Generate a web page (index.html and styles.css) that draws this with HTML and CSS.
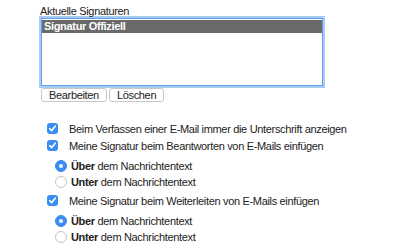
FILE: index.html
```html
<!DOCTYPE html>
<html lang="de">
<head>
    <meta charset="UTF-8">
    <title>Signaturen</title>
    <link rel="stylesheet" href="styles.css">
</head>
<body>

<div class="settings">
    <div class="list-label">Aktuelle Signaturen</div>
    <div class="sig-list">
        <div class="sig-item selected">Signatur Offiziell</div>
    </div>
    <div class="buttons">
        <button class="btn">Bearbeiten</button>
        <button class="btn">Löschen</button>
    </div>

    <div class="options">
        <div class="opt">
            <span class="check"><svg viewBox="0 0 11 11"><path d="M2.6 5.6 L4.6 7.8 L8.4 3" /></svg></span>
            <span>Beim Verfassen einer E-Mail immer die Unterschrift anzeigen</span>
        </div>
        <div class="opt">
            <span class="check"><svg viewBox="0 0 11 11"><path d="M2.6 5.6 L4.6 7.8 L8.4 3" /></svg></span>
            <span>Meine Signatur beim Beantworten von E-Mails einfügen</span>
        </div>
        <div class="radios">
            <div class="radio-row"><span class="radio on"></span><span><b>Über</b> dem Nachrichtentext</span></div>
            <div class="radio-row"><span class="radio"></span><span><b>Unter</b> dem Nachrichtentext</span></div>
        </div>
        <div class="opt">
            <span class="check"><svg viewBox="0 0 11 11"><path d="M2.6 5.6 L4.6 7.8 L8.4 3" /></svg></span>
            <span>Meine Signatur beim Weiterleiten von E-Mails einfügen</span>
        </div>
        <div class="radios">
            <div class="radio-row"><span class="radio on"></span><span><b>Über</b> dem Nachrichtentext</span></div>
            <div class="radio-row"><span class="radio"></span><span><b>Unter</b> dem Nachrichtentext</span></div>
        </div>
    </div>
</div>

</body>
</html>
```

FILE: styles.css
```css
body {
    margin: 0;
    background: #fff;
    color: #222;
    font-family: "Liberation Sans", Arial, sans-serif;
    font-size: 11px;
    letter-spacing: -0.33px;
}
.settings {
    padding: 5px 0 0 40px;
}
.list-label {
    height: 13px;
    line-height: 13px;
}
.sig-list {
    width: 280px;
    height: 66px;
    margin-left: 1px;
    border: 1px solid #5f9ff0;
    box-shadow: 0 0 0 2px #a9c9f6;
    background: #fff;
}
.sig-item {
    height: 13px;
    line-height: 13px;
    padding-left: 2px;
    margin-top: 1px;
}
.sig-item.selected {
    background: #6a6a6a;
    color: #fff;
    font-weight: bold;
}
.buttons {
    display: flex;
    gap: 2px;
    margin-top: 2px;
    margin-left: 1px;
}
.btn {
    font: inherit;
    letter-spacing: inherit;
    color: #222;
    height: 14px;
    line-height: 12px;
    padding: 0 7px;
    background: #fff;
    border: 1px solid #c8c8c8;
    border-radius: 3px;
}
.options {
    margin-top: 18px;
    padding-left: 7px;
}
.opt {
    display: flex;
    align-items: center;
    height: 17px;
}
.check {
    width: 11px;
    height: 11px;
    border-radius: 3px;
    background: #3a8df0;
    margin-right: 11px;
    display: flex;
}
.check svg {
    width: 11px;
    height: 11px;
}
.check path {
    fill: none;
    stroke: #fff;
    stroke-width: 1.5;
    stroke-linecap: round;
    stroke-linejoin: round;
}
.radios {
    padding: 4px 0 2px 8px;
}
.radio-row {
    display: flex;
    align-items: center;
    height: 16px;
    gap: 4px;
}
.radio {
    width: 10px;
    height: 10px;
    border-radius: 50%;
    border: 1px solid #c4c4c4;
    background: #fff;
    position: relative;
}
.radio.on {
    border-color: #3a8df0;
    background: #3a8df0;
}
.radio.on::after {
    content: "";
    position: absolute;
    left: 3px;
    top: 3px;
    width: 4px;
    height: 4px;
    border-radius: 50%;
    background: #fff;
}
```
